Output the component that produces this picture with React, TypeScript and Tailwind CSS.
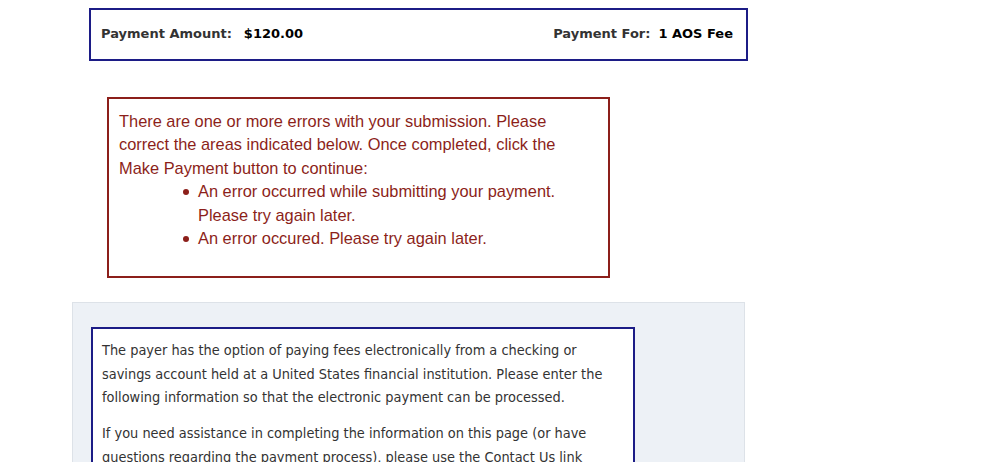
import React from "react";

export default function App() {
  return (
    <div className="w-[1000px] h-[462px] overflow-hidden bg-white">
      <div className="pt-[8px] pl-[89px]">
        <div
          className="w-[659px] h-[53px] border-2 border-[#1c1c86] flex items-center justify-between pl-[10px] pr-[13px] pb-[2px] text-[13px] font-bold text-[#333]"
          style={{ fontFamily: "Verdana, 'DejaVu Sans', sans-serif" }}
        >
          <div className="flex">
            <span>Payment Amount:</span>
            <span className="ml-[12px] text-black">$120.00</span>
          </div>
          <div className="flex">
            <span>Payment For:</span>
            <span className="ml-[8px] text-black">1 AOS Fee</span>
          </div>
        </div>
      </div>

      <div className="mt-[36px] ml-[107px]">
        <div
          className="w-[503px] h-[181px] border-2 border-[#8c1f1a] pl-[10px] pr-[8px] pt-[10.5px] text-[16.4px] leading-[23.5px] text-[#8c1f1a]"
          style={{ fontFamily: "Helvetica, 'Liberation Sans', Arial, sans-serif" }}
        >
          <p>
            There are one or more errors with your submission. Please correct the areas indicated below. Once completed, click the Make Payment button to continue:
          </p>
          <ul className="pl-[79px]">
            <li className="relative">
              <span className="absolute left-[-15px] top-[9px] w-[6px] h-[6px] rounded-full bg-[#8c1f1a]" />
              An error occurred while submitting your payment. Please try again later.
            </li>
            <li className="relative">
              <span className="absolute left-[-15px] top-[9px] w-[6px] h-[6px] rounded-full bg-[#8c1f1a]" />
              An error occured. Please try again later.
            </li>
          </ul>
        </div>
      </div>

      <div className="mt-[24px] ml-[72px] w-[673px] h-[200px] bg-[#edf1f6] border border-[#dde2e8] pt-[24px] pl-[18px]">
        <div
          className="w-[544px] h-[200px] bg-white border-2 border-[#1c1c86] pl-[9px] pr-[10px] pt-[10px] text-[14.4px] leading-[23.5px] text-[#333]"
          style={{ fontFamily: "Verdana, 'DejaVu Sans Condensed', 'DejaVu Sans', sans-serif" }}
        >
          <p>
            The payer has the option of paying fees electronically from a checking or savings account held at a United States financial institution. Please enter the following information so that the electronic payment can be processed.
          </p>
          <p className="mt-[12.5px]">
            If you need assistance in completing the information on this page (or have questions regarding the payment process), please use the Contact Us link
          </p>
        </div>
      </div>
    </div>
  );
}
